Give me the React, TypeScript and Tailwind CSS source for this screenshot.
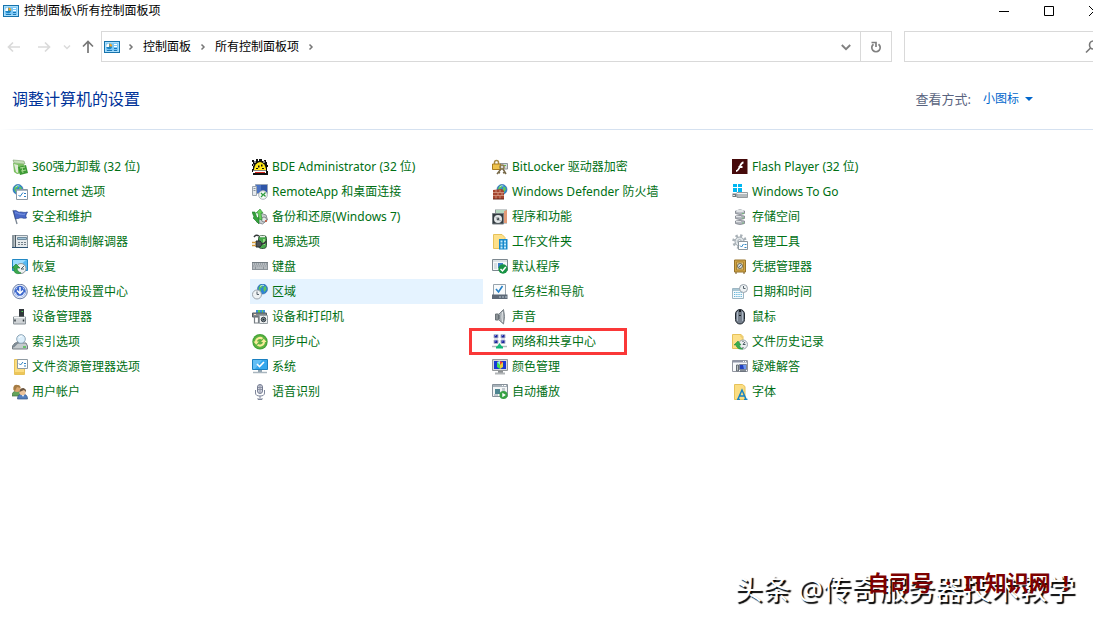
import React from 'react';

interface PanelItem {
  label: string;
  icon: React.ReactNode;
  active?: boolean;
  marked?: boolean;
}

const Svg: React.FC<{ children: React.ReactNode }> = ({ children }) => (
  <svg width="16" height="16" viewBox="0 0 16 16" fill="none" className="shrink-0" aria-hidden="true">
    {children}
  </svg>
);

const ControlPanelIcon = () => (
  <Svg>
    <rect x="0.5" y="2.5" width="15" height="11" fill="#7cc8f6" stroke="#1673ac" />
    <rect x="1.5" y="3.5" width="13" height="9" stroke="#a9defb" />
    <circle cx="5.2" cy="7.5" r="2.8" fill="#1a86c8" />
    <path d="M5 8V4.500A3 3 0 0 0 2.200 8z" fill="#fff" />
    <path d="M5.500 7.500V4.500A3 3 0 0 1 8.200 7.500z" fill="#f6a623" />
    <path d="M10 5.500h3M10 7.500h3" stroke="#fff" />
    <path d="M10 9.500h3M3 11.500h5M10 11.500h3" stroke="#1a78b6" />
  </Svg>
);

const Globe: React.FC<{ cx: number; cy: number; r: number }> = ({ cx, cy, r }) => (
  <g>
    <circle cx={cx} cy={cy} r={r} fill="#2e86d3" stroke="#235f9f" strokeWidth="0.6" />
    <path
      d={`M${cx - r + 1} ${cy - 1}l2-3 2.500 0-1 2.500-2 1 1 2-1 1.500zM${cx + 1} ${cy - 2}l2-1 1 3-2 3-1-2z`}
      fill="#5fc65a"
    />
    <path d={`M${cx - r / 2} ${cy - r / 2}q2-2 4-1`} stroke="#c6e9ff" strokeWidth="0.8" />
  </g>
);

const Clock: React.FC<{ cx: number; cy: number; r: number }> = ({ cx, cy, r }) => (
  <g>
    <circle cx={cx} cy={cy} r={r} fill="#eef2f4" stroke="#9aa3ab" />
    <path d={`M${cx} ${cy - r + 1.5}V${cy}h2`} stroke="#56616b" />
  </g>
);

const Folder = () => (
  <g>
    <path d="M.5.500h8.500l2 2v12H.5z" fill="#fde08a" stroke="#e6c25a" />
    <path d="M9 .5v2.500h2" stroke="#e9c667" />
  </g>
);

const items: PanelItem[] = [
  {
    label: '360强力卸载 (32 位)',
    icon: (
      <Svg>
        <path d="M1 1l11 1 1 3-11-1z" fill="#c3dfb5" stroke="#7f9f72" strokeWidth="0.600" />
        <path d="M1 4l11 1-1 9-6 1-3-2z" fill="#7cbf62" />
        <path d="M2 5l2 8 2 1V6z" fill="#dfead8" />
        <path d="M6 8l8-2 2 8-8 2z" fill="#3d9a35" />
        <path d="M8 9l5-1M9 12l5-1M10 8l1 6" stroke="#a8dc90" />
      </Svg>
    ),
  },
  {
    label: 'BDE Administrator (32 位)',
    icon: (
      <Svg>
        <path d="M0 1h2v1h2V0h2v2h1V0h3v2h2V1h2v2h1v3h1v2h-1v4h1v4H1v-3H0v-3h1V7H0V5h1V3H0z" fill="#111" />
        <path d="M2 10q1-6 6-7 5 1 6 7v1H2z" fill="#ffe81a" />
        <path d="M6 6.500h1.500v2H6zM9 5.500h1.500v2H9zM4 9h2v1H4zM10 9h2v1h-2z" fill="#111" />
        <path d="M1 11.500h13V14H1z" fill="#fff" />
        <path d="M3 13.500h10" stroke="#d8261d" />
        <path d="M2 3h2M11 3h2M1 6h1" stroke="#fff" />
      </Svg>
    ),
  },
  {
    label: 'BitLocker 驱动器加密',
    icon: (
      <Svg>
        <path d="M8 4.500h7.500v5.500H8z" fill="#d5d9dc" stroke="#8d959b" />
        <path d="M12 6.500h2" stroke="#5bc34e" />
        <path d="M2.500 6V3.500a2 2 0 0 1 4 0V6" stroke="#a88b47" strokeWidth="1.500" />
        <path d="M.5 5h8v5.500h-8z" fill="#efc34c" stroke="#a97d1f" />
        <circle cx="10" cy="8" r="2" stroke="#8c7b50" strokeWidth="1.500" />
        <path d="M9 10l-4 5M11 10l3 5M6 13l2 1M13 13l-2 1" stroke="#776948" strokeWidth="1.500" />
      </Svg>
    ),
  },
  {
    label: 'Flash Player (32 位)',
    icon: (
      <Svg>
        <path d="M0 0h15.500v15H0z" fill="#460a0b" />
        <path d="M11.500 3.500c-4 0-3.500 8.500-7.500 8.500M6.500 8h4" stroke="#fff" strokeWidth="1.800" />
      </Svg>
    ),
  },
  {
    label: 'Internet 选项',
    icon: (
      <Svg>
        <Globe cx={6} cy={5.5} r={5} />
        <path d="M4.500 5.500h11v10h-11z" fill="#fff" stroke="#8c98a3" />
        <path d="M5 6.500h10" stroke="#a9b8c4" />
        <path d="M6.500 11l1.500 1.500 3-4M12 9.500h2M12 12.500h2" stroke="#2b7fc4" />
      </Svg>
    ),
  },
  {
    label: 'RemoteApp 和桌面连接',
    icon: (
      <Svg>
        <path d="M3.500.500h12v9h-12z" fill="#2e55a8" stroke="#9ba7b8" />
        <path d="M4 1h5v8H4z" fill="#4a72c4" />
        <path d="M.5 2.500h4v9h-4z" fill="#e6eaee" stroke="#9aa4ae" />
        <path d="M1.500 4.500h2M1.500 6.500h2" stroke="#8993a0" />
        <circle cx="11" cy="11" r="4.300" fill="#f6f8f8" stroke="#aab3b8" />
        <path d="M9 9l2 2-2 2M13.500 8.500l-2 2 2 2" stroke="#2c9b3d" strokeWidth="1.200" />
      </Svg>
    ),
  },
  {
    label: 'Windows Defender 防火墙',
    icon: (
      <Svg>
        <Globe cx={10} cy={5.5} r={5} />
        <path d="M1 6l9-1 2 2v8H1z" fill="#a5452f" />
        <path d="M1 8.500h11M1 11.500h11M4 6v2.500M8 6v2.500M6 9v2.500M10 9v2.500M4 12v3M8 12v3" stroke="#d6a08a" strokeWidth="0.800" />
        <path d="M1 15h11" stroke="#64281c" />
      </Svg>
    ),
  },
  {
    label: 'Windows To Go',
    icon: (
      <Svg>
        <path d="M1 0h4v3H1zM6 0h4v3H6zM1 4h4v4H1zM6 4h4v4H6z" fill="#00b7f1" />
        <path d="M5 8.500h10.500v5H5z" fill="#b5babd" stroke="#959c9f" />
        <path d="M.5 9.500h4v3.500h-4z" fill="#6d757a" />
        <path d="M5 9.500h10" stroke="#eef0f1" />
        <path d="M1 11.500h2" stroke="#dfe3e5" />
      </Svg>
    ),
  },
  {
    label: '安全和维护',
    icon: (
      <Svg>
        <path d="M1 1l4 14" stroke="#7a8592" strokeWidth="1.300" />
        <path d="M1.500 2c3-2 4 2 7 1 2 0 4 1 7 0-2 3-2 4-1 6-3 1-5-1-7 0s-2 0-4 1z" fill="#4a69c8" stroke="#27418f" strokeWidth="0.700" />
        <path d="M3 4c2-1 3 1 5 1s3 1 5 0" stroke="#7f9ae5" />
      </Svg>
    ),
  },
  {
    label: '备份和还原(Windows 7)',
    icon: (
      <Svg>
        <path d="M8 4l6 2 1.500 5-5 4-6-2z" fill="#c8ced1" stroke="#8a9093" />
        <circle cx="12" cy="10.500" r="2.500" fill="#e4e7e8" stroke="#858b8e" />
        <circle cx="14" cy="12" r="1" fill="#c94d32" />
        <path d="M0 3l2 5-1 1 6 6V8L5 9 3 3z" fill="#34a33a" stroke="#1c7729" strokeWidth="0.600" />
        <path d="M8 0L4 4h2l1 6 3 1-1-7h2z" fill="#69cf59" stroke="#278d35" strokeWidth="0.600" />
      </Svg>
    ),
  },
  {
    label: '程序和功能',
    icon: (
      <Svg>
        <path d="M3 .5h12v14H3z" fill="#8d9799" />
        <path d="M4 1h10l-2 3H4z" fill="#b5d9bf" />
        <path d="M12 2l3-1v13h-3z" fill="#e39a76" />
        <path d="M.5 4.500h11v10.500H.5z" fill="#333b40" stroke="#777f83" />
        <circle cx="6" cy="10" r="4" fill="#e3e7e8" />
        <circle cx="6" cy="10" r="1.400" fill="#4a5256" />
        <path d="M3.500 8l2 1.500M7 11l2 1" stroke="#a1acb0" />
      </Svg>
    ),
  },
  {
    label: '存储空间',
    icon: (
      <Svg>
        <path d="M3.500 2q4.500-2.500 9 0v2.500q-4.500 2-9 0zM3.500 7q4.500-1 9 0v2.500q-4.500 2-9 0zM3.500 12q4.500-1 9 0v2.500q-4.500 2-9 0z" fill="#b4b8bf" stroke="#7b8089" strokeWidth="0.800" />
        <ellipse cx="8" cy="2" rx="4" ry="1.200" fill="#e1e4e7" />
        <path d="M4 7.500h5M4 12.500h5" stroke="#dfe2e5" />
        <path d="M10.500 4.500h1M10.500 9h1M10.500 14h1" stroke="#4fca51" />
      </Svg>
    ),
  },
  {
    label: '电话和调制解调器',
    icon: (
      <Svg>
        <path d="M.5 1.500h15v12H.5z" fill="#e6eaec" stroke="#8b97a0" />
        <path d="M1.500 1v13" stroke="#8d989f" strokeWidth="2" />
        <path d="M3.500 1v13" stroke="#4c5860" />
        <path d="M5.500 3.500h9v2h-9z" fill="#a5c6db" stroke="#6f8b9d" />
        <path d="M6 8.500h2M9 8.500h2M12 8.500h2M6 10.500h2M9 10.500h2M12 10.500h2" stroke="#76828b" />
        <path d="M0 13.500h16" stroke="#2e5272" />
      </Svg>
    ),
  },
  {
    label: '电源选项',
    icon: (
      <Svg>
        <rect x="6.500" y="1.500" width="8" height="13" rx="3" fill="#46a84b" stroke="#35543a" />
        <path d="M8 2.500h5" stroke="#e9efe9" strokeWidth="1.500" />
        <path d="M12 5v6" stroke="#b4ec98" strokeWidth="1.500" />
        <path d="M4 7h4q3.500 3 0 6H4z" fill="#4d5355" stroke="#292e30" />
        <path d="M0 8.500h4M0 11.500h4" stroke="#d29b3d" strokeWidth="1.500" />
        <path d="M9 10q4 0 5-3M2 3q2-3 5-1" stroke="#35393b" strokeWidth="1.500" />
      </Svg>
    ),
  },
  {
    label: '工作文件夹',
    icon: (
      <Svg>
        <path d="M1.500.500h8.500l3 3v11H1.500z" fill="#fde08a" stroke="#e6c25a" />
        <path d="M7 5h8.500v10.500H7z" fill="#1788ca" />
        <path d="M8.500 6.500h2v2h-2zM12 6.500h2v2h-2zM8.500 9.500h2v2h-2zM12 9.500h2v2h-2zM8.500 12.500h2v2h-2zM12 12.500h2v2h-2z" fill="#c1eafc" />
      </Svg>
    ),
  },
  {
    label: '管理工具',
    icon: (
      <Svg>
        <circle cx="7.500" cy="7.500" r="6" stroke="#a9b1b7" strokeWidth="2.500" strokeDasharray="2.300 2.400" />
        <circle cx="7.500" cy="7.500" r="4.500" fill="#dfe4e7" stroke="#9da6ad" />
        <circle cx="7.500" cy="7.500" r="1.800" fill="#fff" stroke="#a0a9b0" />
        <path d="M6.500 7.500h9v8h-9z" fill="#fff" stroke="#8d979e" />
        <path d="M8 11.500l1.500 1.500 2-3M12.500 10.500h2M12.500 13.500h2" stroke="#3489c4" />
      </Svg>
    ),
  },
  {
    label: '恢复',
    icon: (
      <Svg>
        <path d="M.5.500h15v11H.5z" fill="#55b8f2" stroke="#2389c4" />
        <path d="M1 1h13L6 8 1 7z" fill="#9adcff" />
        <circle cx="9" cy="9.500" r="5" fill="#eef1f1" stroke="#8b979c" />
        <path d="M9 10l3-3M9 10h3" stroke="#4b5d66" />
        <path d="M0 9l4-4 4 4H5c0 3 2 4 4 5-5 2-8-1-7-5z" fill="#39a84e" stroke="#197d33" strokeWidth="0.600" />
      </Svg>
    ),
  },
  {
    label: '键盘',
    icon: (
      <Svg>
        <path d="M0 3h16v8H0z" fill="#8c9399" />
        <path d="M1 5h14M1.500 7h14" stroke="#e5e9ec" strokeDasharray="1.300 0.700" />
        <path d="M1 9h2M4 9h7M12 9h3" stroke="#dce1e4" />
        <path d="M0 3.500h16" stroke="#6d767c" strokeWidth="0.800" />
      </Svg>
    ),
  },
  {
    label: '默认程序',
    icon: (
      <Svg>
        <path d="M.5.500h15v11H.5z" fill="#f6f8f9" stroke="#7d8890" />
        <path d="M1 2h14" stroke="#dde2e5" strokeWidth="2" />
        <path d="M2 5h3M2 7h3M2 9h3" stroke="#b9c4cd" />
        <path d="M6 4h5v5H6z" fill="#3e81c5" />
        <circle cx="11" cy="10" r="4.700" fill="#179344" />
        <path d="M8.500 10l2 2 3.300-4" stroke="#fff" strokeWidth="1.500" />
      </Svg>
    ),
  },
  {
    label: '凭据管理器',
    icon: (
      <Svg>
        <path d="M2.500 1h11v12h-11z" fill="#d0a548" stroke="#96732b" />
        <path d="M4.500 3h7v8h-7z" fill="#dfc079" stroke="#ad842f" />
        <circle cx="8" cy="7" r="2.500" fill="#d8dde0" stroke="#70705e" />
        <path d="M6.500 8.500l3-3" stroke="#6a7173" />
        <path d="M3 14h2M11 14h2" stroke="#78591b" />
      </Svg>
    ),
  },
  {
    label: '轻松使用设置中心',
    icon: (
      <Svg>
        <circle cx="8" cy="7.500" r="7.300" fill="#e3eaf5" stroke="#6b7da6" />
        <circle cx="8" cy="7.500" r="5.700" fill="#3b66cc" />
        <path d="M8 3v6M5 6.500l3 3 3-3" stroke="#fff" strokeWidth="1.500" />
        <path d="M3.500 8.500a4.500 4 0 0 0 9 0" stroke="#e4eeff" strokeWidth="1.300" />
        <path d="M4 5.500l1-2M12 5.500l-1-2" stroke="#b9cdf5" />
      </Svg>
    ),
  },
  {
    label: '区域',
    active: true,
    icon: (
      <Svg>
        <Globe cx={10.5} cy={5} r={5} />
        <Clock cx={5} cy={10.5} r={4.5} />
      </Svg>
    ),
  },
  {
    label: '任务栏和导航',
    icon: (
      <Svg>
        <path d="M1.500.500h12v13h-12z" fill="#f8fafb" stroke="#98a3ac" />
        <path d="M4 5l2.500 3 4-6" stroke="#2681c8" strokeWidth="1.600" />
        <path d="M0 10.500h15.500V15H0z" fill="#5c6876" />
        <path d="M7 13h2M10 13h2M13 13h2" stroke="#b9c6d1" />
      </Svg>
    ),
  },
  {
    label: '日期和时间',
    icon: (
      <Svg>
        <path d="M.5 4.500h11v10H.5z" fill="#f6fafc" stroke="#9db6c3" />
        <path d="M1 6h10" stroke="#a9c6d3" strokeWidth="2" />
        <path d="M2 8.500h8M2 10.500h8M2 12.500h8" stroke="#62b4d8" strokeDasharray="1.300 0.900" />
        <Clock cx={11.5} cy={4.5} r={4} />
      </Svg>
    ),
  },
  {
    label: '设备管理器',
    icon: (
      <Svg>
        <path d="M7 0h5v8H7z" fill="#32383c" />
        <path d="M9.500 2.500h1.500" stroke="#51dd53" />
        <path d="M1.500 8h12v7h-12z" fill="#d0d4d7" stroke="#8a9298" />
        <path d="M3 10.500v2M11.500 10.500v2" stroke="#343c41" strokeWidth="1.500" />
        <path d="M2 8.500h11" stroke="#f3f5f6" />
      </Svg>
    ),
  },
  {
    label: '设备和打印机',
    icon: (
      <Svg>
        <path d="M4 1h9v4H4z" fill="#3a93db" />
        <path d="M6 1h2v3H6zM10 1h1v3h-1z" fill="#5fcb58" />
        <path d="M.5 4h14v4H.5z" fill="#83898d" stroke="#565d61" />
        <path d="M2.500 7v7h4V7" stroke="#777e83" strokeWidth="1.200" />
        <path d="M7.500 6.500h8v8h-8z" fill="#eef0f1" stroke="#98a0a5" />
        <circle cx="11.500" cy="10.500" r="2.300" fill="#747f86" stroke="#3b454c" />
        <circle cx="11.500" cy="10.500" r="0.800" fill="#20292e" />
        <path d="M2 5.500h2" stroke="#f6d9c0" />
      </Svg>
    ),
  },
  {
    label: '声音',
    icon: (
      <Svg>
        <path d="M3.500 5h3v6h-3z" fill="#8b9296" stroke="#6b7277" />
        <path d="M6.500 5.500l5-5q2 7 0 14.500l-5-4.500z" fill="#a8afb4" stroke="#7a8288" />
        <path d="M10.500 3q-1 5 0 10" stroke="#e7eaec" />
        <path d="M7 6v4" stroke="#555e64" />
      </Svg>
    ),
  },
  {
    label: '鼠标',
    icon: (
      <Svg>
        <rect x="3.500" y="0.500" width="9" height="14.500" rx="4.500" fill="#76808d" stroke="#20272f" />
        <path d="M5.500 3v9M10.500 3v9" stroke="#aab5c2" />
        <path d="M8 1v6" stroke="#161d24" strokeWidth="2" />
        <path d="M8 3v3" stroke="#c9d4dd" />
      </Svg>
    ),
  },
  {
    label: '索引选项',
    icon: (
      <Svg>
        <path d="M3 9h11l1.500 3v3H.5v-3z" fill="#c5cbce" stroke="#747d82" />
        <path d="M11 13h3" stroke="#49be4d" strokeWidth="1.500" />
        <circle cx="9" cy="5" r="4.300" fill="#dceefa" stroke="#8ca5b7" />
        <path d="M6 8l-5 5" stroke="#7d8a93" strokeWidth="2" />
        <path d="M7 4q1-2 3-2" stroke="#fff" />
      </Svg>
    ),
  },
  {
    label: '同步中心',
    icon: (
      <Svg>
        <circle cx="8" cy="7.800" r="7.700" fill="#45a538" />
        <circle cx="8" cy="7.800" r="6.500" fill="#5fb342" />
        <path d="M4 8a4 4 0 0 1 6.500-3.200M12 7.500a4 4 0 0 1-6.500 3.200" stroke="#f8ec9a" strokeWidth="2" />
        <path d="M1.500 7.500h5.500L4.200 10.800zM9 8h5.500l-2.700-3.300z" fill="#f8ec9a" />
      </Svg>
    ),
  },
  {
    label: '网络和共享中心',
    marked: true,
    icon: (
      <Svg>
        <path d="M2 .5h4v3.500H2zM9 .5h4v3.500H9zM2 6h4v3.500H2zM9 6h4v3.500H9z" fill="#1f2799" stroke="#b3b8cc" />
        <path d="M3 1.500h1M10 1.500h1M3 7h1M10 7h1" stroke="#7587ff" />
        <path d="M0 12.500h15" stroke="#b4bdbc" strokeWidth="1.500" />
        <path d="M7.500 9l3.500 5H4z" fill="#17bd7c" />
        <path d="M4 13.500h7" stroke="#10b573" strokeWidth="2" />
      </Svg>
    ),
  },
  {
    label: '文件历史记录',
    icon: (
      <Svg>
        <Folder />
        <circle cx="11" cy="10.500" r="4.500" fill="#e9edef" stroke="#98a3aa" />
        <path d="M11 10.500l2-2.500M11 10.500h2.500M11 7v1M11 13v1" stroke="#4c5b64" />
        <path d="M2 11l4-4 3 4H7q1 3 4 4-6 1-7-4z" fill="#39ad4d" stroke="#1b8534" strokeWidth="0.500" />
      </Svg>
    ),
  },
  {
    label: '文件资源管理器选项',
    icon: (
      <Svg>
        <path d="M2.500.500h8l2 2v13h-10z" fill="#fbdc7f" stroke="#e6c25a" />
        <path d="M5.500.500h10v9h-10z" fill="#fff" stroke="#8f9aa2" />
        <path d="M7 4.500l1.500 1.500L11 3M12 4.500h2M12 7h2" stroke="#3182c2" />
        <path d="M3 14h9" stroke="#edc65a" strokeWidth="2" />
      </Svg>
    ),
  },
  {
    label: '系统',
    icon: (
      <Svg>
        <path d="M.5.500h15v10H.5z" fill="#35a7ed" stroke="#1a80c1" />
        <path d="M1 1h9L3 10H1z" fill="#64bff5" />
        <path d="M5 5l2.500 2.500L12 3" stroke="#fff" strokeWidth="1.600" />
        <path d="M6 11h4v2H6z" fill="#8aa0af" />
        <path d="M1 13.500h14" stroke="#a9b6bf" strokeWidth="1.500" />
      </Svg>
    ),
  },
  {
    label: '颜色管理',
    icon: (
      <Svg>
        <path d="M.5.500h15v11H.5z" fill="#d6d8d9" stroke="#95999b" />
        <path d="M2 2h12v8H2z" fill="#1739d5" />
        <path d="M5 3l3-1 3 1v3H8z" fill="#ec3d36" />
        <path d="M5 3l3 3v4L5 8z" fill="#42e14c" />
        <path d="M8 6l3-3v5l-3 2z" fill="#e5d13a" />
        <path d="M5 3l3-1v4z" fill="#7ff7f7" />
        <path d="M6 12h5v2H6z" fill="#8b9092" />
        <path d="M3 14.500h10" stroke="#b1b5b7" strokeWidth="2" />
      </Svg>
    ),
  },
  {
    label: '疑难解答',
    icon: (
      <Svg>
        <path d="M.5 1.500h15v11H.5z" fill="#f8f9fb" stroke="#9296a0" />
        <path d="M1 2.500h14" stroke="#8f95a6" strokeWidth="2" />
        <path d="M11 2.500h1M13 2.500h1" stroke="#fff" />
        <path d="M7.500 5.500h7v5h-7z" fill="#2240bf" stroke="#7b849c" />
        <path d="M11 6h3v4h-2z" fill="#6c94ef" />
        <path d="M4.500 6v6h2V6z" fill="#bcc1c5" stroke="#666e75" />
        <path d="M8 12h6" stroke="#616873" strokeWidth="1.500" />
      </Svg>
    ),
  },
  {
    label: '用户帐户',
    icon: (
      <Svg>
        <path d="M0 12q0-5 5-5t5 5z" fill="#63a35a" stroke="#3f7142" strokeWidth="0.700" />
        <circle cx="5" cy="4.500" r="3.500" fill="#dba66e" />
        <path d="M1.500 6V3q1-3 4-2 3 0 3 3L5 3 3 7z" fill="#a57c45" />
        <path d="M5.500 15q0-5 5-5t5 5z" fill="#537ebd" stroke="#355581" strokeWidth="0.700" />
        <circle cx="10.500" cy="8" r="3.200" fill="#edc39a" />
        <path d="M7.500 8q0-4 4-4 3 1 2.500 4l-2-2z" fill="#6b5540" />
        <path d="M10 11l1 2 1-2" fill="#fff" />
      </Svg>
    ),
  },
  {
    label: '语音识别',
    icon: (
      <Svg>
        <rect x="5.500" y="0.500" width="5" height="9" rx="2.500" fill="#d4d7e0" stroke="#747b91" />
        <path d="M6 3.500h4M6 5.500h4M8 1v8" stroke="#8d93a6" />
        <path d="M3.500 6v3q0 3 4.500 3t4.500-3V6M8 12v3.500M6 14v1.500h4V14" stroke="#7e869b" />
      </Svg>
    ),
  },
  {
    label: '自动播放',
    icon: (
      <Svg>
        <path d="M.5.500h15v12H.5z" fill="#f4f6f7" stroke="#87919a" />
        <path d="M1 2h14" stroke="#a8b2ba" strokeWidth="2" />
        <path d="M10 1.500h1M12 1.500h2" stroke="#fff" />
        <path d="M3 5h5v5H3z" fill="#4d8590" />
        <path d="M10 5h3M10 7h3M2 11h4" stroke="#8f9ca5" />
        <circle cx="11.500" cy="11" r="4" fill="#36a143" />
        <path d="M10.300 8.700v4.600l3.500-2.300z" fill="#fff" />
      </Svg>
    ),
  },
  {
    label: '字体',
    icon: (
      <Svg>
        <path d="M2.500.500h8l2.500 2v13H2.500z" fill="#fbdd82" stroke="#e6c25a" />
        <path d="M6 15l4-9 4 9M7.500 12h5M5 15.500h3M12 15.500h3.500" stroke="#1783c4" strokeWidth="1.500" />
      </Svg>
    ),
  },
];

const Chevron: React.FC<{ down?: boolean; className?: string }> = ({ down, className }) => (
  <svg width="8" height="8" viewBox="0 0 8 8" fill="none" className={className} aria-hidden="true">
    <path d={down ? 'M1 2.500l3 3 3-3' : 'M2.500 1.500l2.500 2.500-2.500 2.500'} stroke="currentColor" strokeWidth="1.500" />
  </svg>
);

const Arrow: React.FC<{ d: string }> = ({ d }) => (
  <svg width="14" height="14" viewBox="0 0 14 14" fill="none" stroke="currentColor" strokeWidth="1.700" aria-hidden="true">
    <path d={d} />
  </svg>
);

const TitleBar = () => (
  <header className="flex h-[21px] items-center pl-[3px]">
    <ControlPanelIcon />
    <h1 className="ml-[5px] flex-1 text-xs leading-4 text-black">控制面板\所有控制面板项</h1>
    <div className="-mr-[23px] flex text-black">
      <button type="button" aria-label="最小化" className="flex h-5 w-[45px] items-center justify-center">
        <svg width="10" height="10" viewBox="0 0 10 10"><path d="M0 5.500h10" stroke="currentColor" /></svg>
      </button>
      <button type="button" aria-label="最大化" className="flex h-5 w-[45px] items-center justify-center">
        <svg width="10" height="10" viewBox="0 0 10 10" fill="none"><path d="M.5.500h9v9h-9z" stroke="currentColor" /></svg>
      </button>
      <button type="button" aria-label="关闭" className="flex h-5 w-[45px] items-center justify-center">
        <svg width="10" height="10" viewBox="0 0 10 10"><path d="M0 0l10 10M10 0L0 10" stroke="currentColor" /></svg>
      </button>
    </div>
  </header>
);

const AddressBar = () => (
  <div className="mt-[10px] flex h-[31px] items-stretch">
    <nav className="flex w-[101px] shrink-0 items-center pl-[7px] text-[#dadada]">
      <button type="button" aria-label="后退"><Arrow d="M13 7H1.500M6 2.500L1.500 7 6 11.500" /></button>
      <button type="button" aria-label="前进" className="ml-4"><Arrow d="M1 7h11.500M8 2.500l4.500 4.500L8 11.500" /></button>
      <button type="button" aria-label="最近浏览的位置" className="ml-3"><Chevron down /></button>
      <button type="button" aria-label="上移" className="ml-[10px] text-[#777]"><Arrow d="M7 13V1.500M2 6.500l5-5 5 5" /></button>
    </nav>
    <div className="flex min-w-0 flex-1 items-center border border-[#d9d9d9] pl-[2px] text-xs leading-4 text-black">
      <ControlPanelIcon />
      <Chevron className="ml-[7px] text-[#777]" />
      <a href="#panel" className="ml-2">控制面板</a>
      <Chevron className="ml-2 text-[#777]" />
      <a href="#all" className="ml-2">所有控制面板项</a>
      <Chevron className="ml-2 text-[#777]" />
      <button type="button" aria-label="历史记录" className="mr-[9px] ml-auto text-[#808080]">
        <svg width="10" height="10" viewBox="0 0 10 10" fill="none"><path d="M.8 3L5 7.200 9.200 3" stroke="currentColor" strokeWidth="1.900" /></svg>
      </button>
      <button type="button" aria-label="刷新" className="flex h-full w-[31px] items-center justify-center border-l border-[#d9d9d9] text-[#808080]">
        <svg width="12" height="12" viewBox="0 0 12 12" fill="none" stroke="currentColor" strokeWidth="1.700">
          <path d="M8.500 3.200a4.200 4.200 0 1 1-5 0M1.500 1.500H6V6" />
        </svg>
      </button>
    </div>
    <label className="-mr-4 ml-3 flex w-[205px] shrink-0 items-center border border-[#d9d9d9] text-[#777]">
      <input type="search" aria-label="搜索控制面板" className="h-full min-w-0 flex-1 px-2 text-xs outline-none" />
      <svg width="14" height="14" viewBox="0 0 14 14" fill="none" stroke="currentColor" strokeWidth="1.600" className="mr-[9px]" aria-hidden="true">
        <circle cx="8.500" cy="5" r="4" />
        <path d="M5.500 8L1 12.500" />
      </svg>
    </label>
  </div>
);

const PanelLink: React.FC<{ item: PanelItem }> = ({ item }) => (
  <li className="relative h-[25px] pr-[7px]">
    <a
      href="#item"
      className={`flex h-full items-center gap-1 pl-[2px] text-xs leading-4 whitespace-nowrap text-[#006f14] ${
        item.active ? 'bg-[#e5f3ff]' : 'hover:bg-[#e5f3ff]'
      }`}
    >
      {item.icon}
      <span>{item.label}</span>
    </a>
    {item.marked && (
      <span className="pointer-events-none absolute -top-px -left-[21px] h-[27px] w-[158px] border-3 border-[#fa3838]" />
    )}
  </li>
);

export default function App() {
  return (
    <div className="relative min-h-screen overflow-hidden bg-white font-['Noto_Sans','Noto_Sans_CJK_SC',sans-serif]">
      <TitleBar />
      <AddressBar />
      <main>
        <div className="flex h-[67px] items-center pt-[7px] pr-[60px] pl-3">
          <h2 className="flex-1 text-base leading-6 text-[#003399]">调整计算机的设置</h2>
          <span className="text-[13px] leading-4 text-[#5a6480]">查看方式:</span>
          <button type="button" className="ml-3 flex items-center gap-[6px] text-xs leading-4 text-[#0066cc]">
            小图标
            <svg width="8" height="4" viewBox="0 0 8 4" aria-hidden="true"><path d="M0 0h8L4 4z" fill="currentColor" /></svg>
          </button>
        </div>
        <div className="h-px bg-linear-to-r from-white to-[#d5e1f0] to-5%" />
        <ul className="mt-6 grid grid-cols-[repeat(auto-fill,240px)] pl-[10px]">
          {items.map((item) => (
            <PanelLink key={item.label} item={item} />
          ))}
        </ul>
      </main>
      <p className="absolute right-[18px] bottom-[14px] text-[28px] leading-9 whitespace-nowrap text-white [text-shadow:2px_2px_1px_#000]">
        头条 @传奇服务器技术教学
      </p>
      <p className="absolute right-6 bottom-[25px] flex gap-3 text-[22px] leading-7 font-bold whitespace-nowrap text-[#7d0000]">
        <span>自司号</span>
        <span>·</span>
        <span>IT知识网</span>
        <span>!</span>
      </p>
    </div>
  );
}
